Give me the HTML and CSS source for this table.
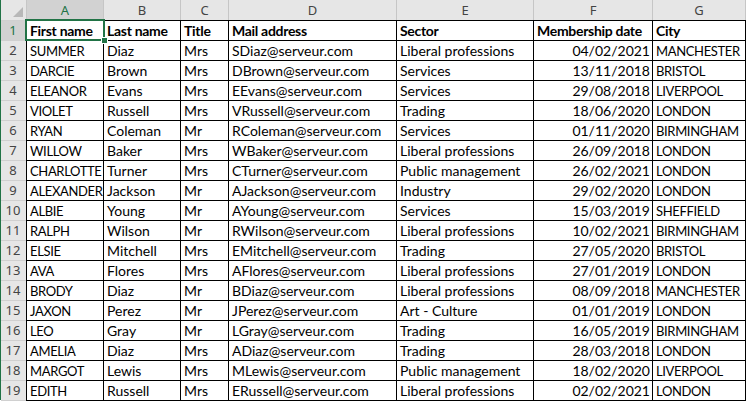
FILE: index.html
```html
<!DOCTYPE html>
<html lang="en">
<head>
<meta charset="utf-8">
<title>Members</title>
<link rel="stylesheet" href="styles.css">
</head>
<body>
<div class="sheet">
  <div class="corner"><span class="tri"></span></div>
  <div class="ch sel">A</div><div class="ch">B</div><div class="ch">C</div><div class="ch">D</div><div class="ch">E</div><div class="ch">F</div><div class="ch last">G</div>

  <div class="rh sel">1</div>
  <div class="c b active">First name</div><div class="c b">Last name</div><div class="c b">Title</div><div class="c b">Mail address</div><div class="c b">Sector</div><div class="c b">Membership date</div><div class="c b last">City</div>

  <div class="rh">2</div><div class="c">SUMMER</div><div class="c">Diaz</div><div class="c">Mrs</div><div class="c">SDiaz@serveur.com</div><div class="c">Liberal professions</div><div class="c r">04/02/2021</div><div class="c last">MANCHESTER</div>
  <div class="rh">3</div><div class="c">DARCIE</div><div class="c">Brown</div><div class="c">Mrs</div><div class="c">DBrown@serveur.com</div><div class="c">Services</div><div class="c r">13/11/2018</div><div class="c last">BRISTOL</div>
  <div class="rh">4</div><div class="c">ELEANOR</div><div class="c">Evans</div><div class="c">Mrs</div><div class="c">EEvans@serveur.com</div><div class="c">Services</div><div class="c r">29/08/2018</div><div class="c last">LIVERPOOL</div>
  <div class="rh">5</div><div class="c">VIOLET</div><div class="c">Russell</div><div class="c">Mrs</div><div class="c">VRussell@serveur.com</div><div class="c">Trading</div><div class="c r">18/06/2020</div><div class="c last">LONDON</div>
  <div class="rh">6</div><div class="c">RYAN</div><div class="c">Coleman</div><div class="c">Mr</div><div class="c">RColeman@serveur.com</div><div class="c">Services</div><div class="c r">01/11/2020</div><div class="c last">BIRMINGHAM</div>
  <div class="rh">7</div><div class="c">WILLOW</div><div class="c">Baker</div><div class="c">Mrs</div><div class="c">WBaker@serveur.com</div><div class="c">Liberal professions</div><div class="c r">26/09/2018</div><div class="c last">LONDON</div>
  <div class="rh">8</div><div class="c">CHARLOTTE</div><div class="c">Turner</div><div class="c">Mrs</div><div class="c">CTurner@serveur.com</div><div class="c">Public management</div><div class="c r">26/02/2021</div><div class="c last">LONDON</div>
  <div class="rh">9</div><div class="c">ALEXANDER</div><div class="c">Jackson</div><div class="c">Mr</div><div class="c">AJackson@serveur.com</div><div class="c">Industry</div><div class="c r">29/02/2020</div><div class="c last">LONDON</div>
  <div class="rh">10</div><div class="c">ALBIE</div><div class="c">Young</div><div class="c">Mr</div><div class="c">AYoung@serveur.com</div><div class="c">Services</div><div class="c r">15/03/2019</div><div class="c last">SHEFFIELD</div>
  <div class="rh">11</div><div class="c">RALPH</div><div class="c">Wilson</div><div class="c">Mr</div><div class="c">RWilson@serveur.com</div><div class="c">Liberal professions</div><div class="c r">10/02/2021</div><div class="c last">BIRMINGHAM</div>
  <div class="rh">12</div><div class="c">ELSIE</div><div class="c">Mitchell</div><div class="c">Mrs</div><div class="c">EMitchell@serveur.com</div><div class="c">Trading</div><div class="c r">27/05/2020</div><div class="c last">BRISTOL</div>
  <div class="rh">13</div><div class="c">AVA</div><div class="c">Flores</div><div class="c">Mrs</div><div class="c">AFlores@serveur.com</div><div class="c">Liberal professions</div><div class="c r">27/01/2019</div><div class="c last">LONDON</div>
  <div class="rh">14</div><div class="c">BRODY</div><div class="c">Diaz</div><div class="c">Mr</div><div class="c">BDiaz@serveur.com</div><div class="c">Liberal professions</div><div class="c r">08/09/2018</div><div class="c last">MANCHESTER</div>
  <div class="rh">15</div><div class="c">JAXON</div><div class="c">Perez</div><div class="c">Mr</div><div class="c">JPerez@serveur.com</div><div class="c">Art - Culture</div><div class="c r">01/01/2019</div><div class="c last">LONDON</div>
  <div class="rh">16</div><div class="c">LEO</div><div class="c">Gray</div><div class="c">Mr</div><div class="c">LGray@serveur.com</div><div class="c">Trading</div><div class="c r">16/05/2019</div><div class="c last">BIRMINGHAM</div>
  <div class="rh">17</div><div class="c">AMELIA</div><div class="c">Diaz</div><div class="c">Mrs</div><div class="c">ADiaz@serveur.com</div><div class="c">Trading</div><div class="c r">28/03/2018</div><div class="c last">LONDON</div>
  <div class="rh">18</div><div class="c">MARGOT</div><div class="c">Lewis</div><div class="c">Mrs</div><div class="c">MLewis@serveur.com</div><div class="c">Public management</div><div class="c r">18/02/2020</div><div class="c last">LIVERPOOL</div>
  <div class="rh bottom">19</div><div class="c bottom">EDITH</div><div class="c bottom">Russell</div><div class="c bottom">Mrs</div><div class="c bottom">ERussell@serveur.com</div><div class="c bottom">Liberal professions</div><div class="c bottom r">02/02/2021</div><div class="c bottom last">LONDON</div>
</div>
</body>
</html>
```
FILE: styles.css
```css
* { box-sizing: border-box; }
html, body { margin: 0; padding: 0; background: #ffffff; }
body { width: 746px; height: 401px; overflow: hidden; }

.sheet {
  display: grid;
  grid-template-columns: 25px 77px 77px 48px 168px 137px 119px 94px;
  grid-auto-rows: 20px;
  border-left: 1px solid #217346;
  width: 746px;
  font-family: Lato, "Liberation Sans", sans-serif;
  font-size: 14px;
  color: #000;
}

.corner {
  background: #e6e6e6;
  display: flex;
  justify-content: flex-end;
  align-items: flex-end;
  padding: 0 3px 3px 0;
}
.tri {
  width: 0; height: 0;
  border-left: 10px solid transparent;
  border-bottom: 10px solid #b8b8b8;
}

.ch {
  background: #e6e6e6;
  border-left: 1px solid #c6c6c6;
  color: #444;
  font-family: "Noto Sans", sans-serif;
  font-size: 13px;
  line-height: 20px;
  text-align: center;
}
.ch.sel { background: #d2d2d2; color: #217346; }
.ch.last { border-right: 1px solid #c6c6c6; }

.rh {
  background: #e6e6e6;
  border-top: 1px solid #d0d0d0;
  color: #444;
  font-family: "Noto Sans", sans-serif;
  font-size: 13px;
  line-height: 19px;
  text-align: center;
  padding-right: 1px;
}
.rh.sel { background: #d2d2d2; color: #217346; }

.c {
  border-top: 1px solid #000;
  border-left: 1px solid #000;
  padding: 1px 3px 0;
  line-height: 18px;
  white-space: nowrap;
  overflow: hidden;
}
/* columns A (first names) and G (cities) hold upper-case text, narrower in Calibri */
.c:nth-child(8n+2):not(.b),
.c:nth-child(8n):not(.b) {
  font-size: 13px;
  letter-spacing: -0.35px;
  padding-top: 2px;
  line-height: 17px;
}
.c.b { font-weight: 700; letter-spacing: -0.3px; }
.c.r { text-align: right; padding-right: 2px; }
.c.last { border-right: 1px solid #000; padding-right: 1px; }
.c.bottom, .rh.bottom { height: 21px; border-bottom: 1px solid #000; }
.rh.bottom { border-bottom-color: #d0d0d0; }

.c.active { position: relative; overflow: visible; }
.c.active::after {
  content: "";
  position: absolute;
  top: -2px; left: -2px; right: -2px; bottom: -1px;
  border: 2px solid #217346;
  pointer-events: none;
}
.c.active::before {
  content: "";
  position: absolute;
  right: -4px; bottom: -3px;
  width: 5px; height: 5px;
  background: #217346;
  outline: 1px solid #fff;
  z-index: 2;
}
```
